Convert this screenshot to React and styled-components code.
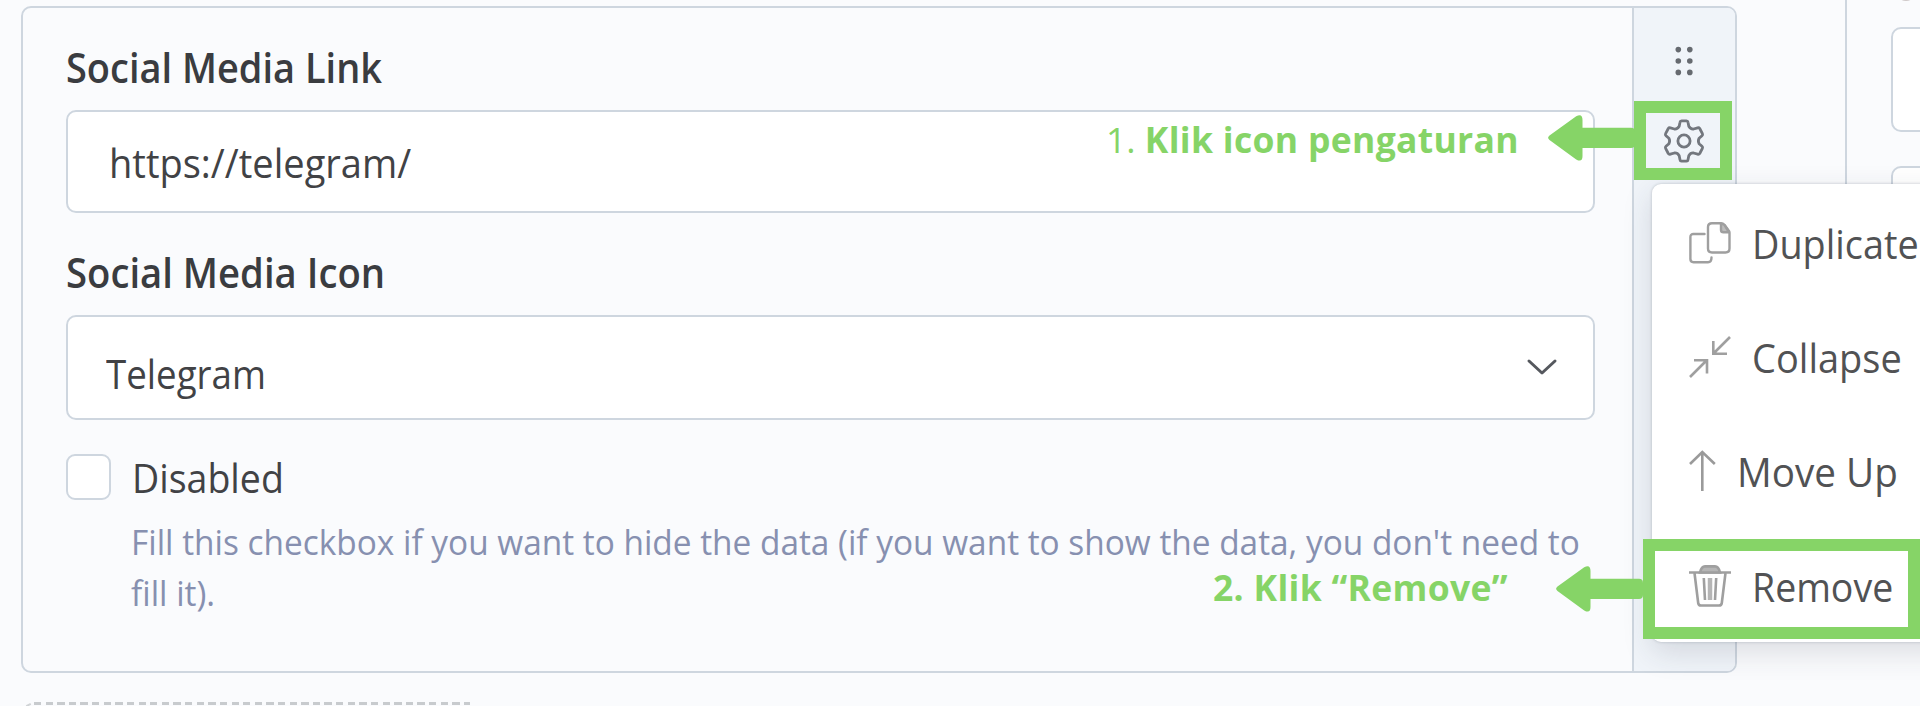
import React from "react";
import styled, { createGlobalStyle } from "styled-components";

const line = "#ced6df";
const green = "#86d467";

const GlobalStyle = createGlobalStyle`
  * { box-sizing: border-box; }
  html, body { margin: 0; padding: 0; }
  body { background: #fafbfd; overflow: hidden; font-family: "Open Sans", "Noto Sans", sans-serif; }
`;

const Page = styled.div`
  position: relative;
  width: 1920px;
  height: 706px;
  overflow: hidden;
  display: flex;
  background: #fafbfd;
  color: #414245;
`;

const Main = styled.main`
  width: 1845px;
  flex: none;
  padding: 6.4px 0 0 20.6px;
`;

const Card = styled.section`
  display: flex;
  width: 1716.4px;
  height: 667px;
  border: 2px solid ${line};
  border-radius: 10px;
  overflow: hidden;
`;

const Fields = styled.div`
  flex: 1;
  min-width: 0;
  padding: 0 37px 0 43.6px;
`;

const Rail = styled.aside`
  width: 103px;
  flex: none;
  border-left: 2px solid ${line};
  background: #f0f4f9;
  display: flex;
  flex-direction: column;
  align-items: center;
  padding-top: 38px;
  gap: 43px;
`;

/* $fit condenses the letter forms horizontally without changing their height */
const Text = styled.span`
  display: inline-block;
  white-space: nowrap;
  font-size: ${(p) => p.$size || 41}px;
  font-weight: ${(p) => p.$weight || 400};
  letter-spacing: ${(p) => p.$track || 0}px;
  transform: scaleX(${(p) => p.$fit || 1});
  transform-origin: left center;
`;

const SelectValue = styled(Text)`
  padding-top: 10px;
`;

const Label = styled.label`
  display: block;
  height: 102px;
  padding-top: 29px;
  line-height: 60px;
  color: #3a3c40;
`;

const Control = styled.div`
  display: flex;
  align-items: center;
  justify-content: space-between;
  height: ${(p) => p.$height}px;
  padding: ${(p) => p.$pad};
  border: 2px solid ${line};
  border-radius: 10px;
  background: #fff;
  line-height: 60px;
`;

const CheckRow = styled.div`
  display: flex;
  align-items: center;
  gap: 20.5px;
  margin-top: 34px;
  height: 46px;
`;

const Checkbox = styled.span`
  width: 45px;
  height: 46px;
  flex: none;
  border: 2px solid ${line};
  border-radius: 9px;
  background: #fff;
`;

const Help = styled.p`
  margin: 17px 0 0 65px;
  line-height: 50.6px;
  color: #8790b0;
  ${Text} { display: block; }
`;

const AddButton = styled.div`
  position: relative;
  width: 436px;
  height: 3px;
  margin: 29px 0 0 13.7px;
  background: repeating-linear-gradient(90deg, #c8cbce 0 7.3px, transparent 7.3px 11.62px);
  &::before {
    content: "";
    position: absolute;
    left: -8px;
    top: 1.5px;
    width: 5px;
    height: 2px;
    background: #d0d3d6;
    transform: rotate(-25deg);
  }
`;

const SidePanel = styled.aside`
  position: relative;
  flex: 1;
  height: 400px;
  border-left: 2px solid ${line};
  padding: 27px 0 0 44px;
  display: flex;
  flex-direction: column;
  gap: 34px;
  &::before {
    content: "";
    position: absolute;
    left: 52px;
    top: -8px;
    width: 14px;
    height: 9px;
    border-radius: 50%;
    background: #cfc9c9;
  }
`;

const SideField = styled.div`
  width: 200px;
  height: 105px;
  flex: none;
  border: 2px solid ${line};
  border-radius: 10px;
  background: #fff;
`;

const Menu = styled.div`
  position: absolute;
  left: 1652px;
  top: 184px;
  width: 320px;
  height: 458px;
  border-radius: 9px;
  background: #fff;
  box-shadow: 0 10px 30px rgba(40, 50, 70, 0.15), 0 0 3px rgba(40, 50, 70, 0.25);
  color: #515254;
  padding-top: 1.5px;
`;

const MenuItem = styled.div`
  display: flex;
  align-items: center;
  gap: ${(p) => p.$gap}px;
  height: 114.3px;
  padding-left: 37px;
  line-height: 60px;
  svg { flex: none; }
`;

const Highlight = styled.div`
  position: absolute;
  left: ${(p) => p.$x}px;
  top: ${(p) => p.$y}px;
  width: ${(p) => p.$w}px;
  height: ${(p) => p.$h}px;
  border: 12px solid ${green};
`;

const Callout = styled.div`
  position: absolute;
  left: ${(p) => p.$x}px;
  top: ${(p) => p.$y}px;
  display: flex;
  line-height: 48px;
  color: ${green};
`;

const ArrowBox = styled.svg`
  position: absolute;
  left: ${(p) => p.$x}px;
  top: ${(p) => p.$y}px;
`;

const Arrow = ({ x, y }) => (
  <ArrowBox $x={x} $y={y} width="88" height="46" viewBox="0 0 88 46" fill={green}>
    <path d="M1.5 20.5 28.2 1.2Q34.5-2 34.5 5V12.8H83Q87 12.8 87 17V29Q87 33 83 33H34.5V41Q34.5 48 28.2 44.4L1.5 25Q-1.3 22.8 1.5 20.5Z" />
  </ArrowBox>
);

const Dots = () => (
  <svg width="18" height="30" viewBox="0 0 18 30" fill="#666a70">
    {[3.3, 14.8].flatMap((x) => [3.6, 15, 26.4].map((y) => <circle key={x + "-" + y} cx={x} cy={y} r="2.8" />))}
  </svg>
);

const Gear = () => (
  <svg width="42" height="44" viewBox="0 0 42 44" fill="none" stroke="#73777e" strokeWidth="2.8" strokeLinejoin="round">
    <path d="M17 3.2Q17.2 1.8 18.5 1.8H23.5Q24.8 1.8 25 3.2L25.8 7.3Q27.5 10.3 30.6 10L34.6 8.8Q36 8.4 36.7 9.5L39.4 14.7Q40 15.8 39 16.7L36.1 19.3Q34.6 22 36.1 24.7L39 27.3Q40 28.2 39.4 29.3L36.7 34.5Q36 35.6 34.6 35.2L30.6 34Q27.5 33.7 25.8 36.7L25 40.8Q24.8 42.2 23.5 42.2H18.5Q17.2 42.2 17 40.8L16.2 36.7Q14.5 33.7 11.4 34L7.4 35.2Q6 35.6 5.3 34.5L2.6 29.3Q2 28.2 3 27.3L5.9 24.7Q7.4 22 5.9 19.3L3 16.7Q2 15.8 2.6 14.7L5.3 9.5Q6 8.4 7.4 8.8L11.4 10Q14.5 10.3 16.2 7.3Z" />
    <circle cx="21" cy="22" r="6.1" />
  </svg>
);

const Chevron = () => (
  <svg width="32" height="20" viewBox="0 0 32 20" fill="none" stroke="#55585e" strokeWidth="3" strokeLinecap="round" strokeLinejoin="round">
    <path d="M3 3 16 15 29 3" />
  </svg>
);

const CopyIcon = () => (
  <svg width="42" height="42" viewBox="0 0 42 42" fill="none" stroke="#9f9f9f" strokeWidth="2.4" strokeLinejoin="round" strokeLinecap="round">
    <path d="M15.5 12H4.5Q1.4 12 1.4 15V37Q1.4 40.2 4.5 40.2H19Q22.5 40.2 22.5 35.5" />
    <path d="M32 1.2H23Q19 1.2 19 5V26.5Q19 30.5 23 30.5H36.5Q40.5 30.5 40.5 26.5V11Q40.5 9 39 7.5L35.5 3Q34 1.2 32 1.2Z" />
    <path d="M32 1.5V8Q32 10.3 34.5 10.3H40L35.5 3Z" fill="#bdbdbd" />
  </svg>
);

const CollapseIcon = () => (
  <svg width="42" height="42" viewBox="0 0 42 42" fill="none" stroke="#9f9f9f" strokeWidth="2.6">
    <path d="M41 1 24.5 17.5M24.3 5V17.8H38M1 41 17.5 24.5M5 24.2H18V37.5" />
  </svg>
);

const UpIcon = () => (
  <svg width="27" height="42" viewBox="0 0 27 42" fill="none" stroke="#9a9a9a" strokeWidth="2.6">
    <path d="M13.3 41V2M1 14 13.3 2 25.8 14" />
  </svg>
);

const TrashIcon = () => (
  <svg width="42" height="42" viewBox="0 0 42 42" fill="none" stroke="#9f9f9f" strokeWidth="2.6">
    <path d="M0 7.5H42" />
    <path d="M11 7.5Q12.5 1.4 16 1.4H26Q29.5 1.4 31 7.5Z" fill="#b5b5b5" />
    <path d="M5.5 8 9.2 38Q9.5 40.5 12 40.5H30Q32.5 40.5 32.8 38L36.5 8" />
    <path d="M14.8 13 16 35M27.2 13 26 35" />
    <path d="M21 13V35" stroke="#b5b5b5" strokeWidth="4.5" />
  </svg>
);

const menuItems = [
  { label: "Duplicate", Icon: CopyIcon, gap: 20.5, fit: 0.922 },
  { label: "Collapse", Icon: CollapseIcon, gap: 20.5, fit: 0.927 },
  { label: "Move Up", Icon: UpIcon, gap: 21, fit: 0.942 },
  { label: "Remove", Icon: TrashIcon, gap: 20.5, fit: 0.914 },
];

export default function App() {
  return (
    <>
      <GlobalStyle />
      <Page>
        <Main>
          <Card>
            <Fields>
              <Label><Text $weight={600} $fit={0.926}>Social Media Link</Text></Label>
              <Control $height={103} $pad="0 36px 0 40.5px">
                <Text $fit={0.928}>https://telegram/</Text>
              </Control>
              <Label><Text $weight={600} $fit={0.933}>Social Media Icon</Text></Label>
              <Control $height={105} $pad="0 35px 0 38px">
                <SelectValue $fit={0.895}>Telegram</SelectValue>
                <Chevron />
              </Control>
              <CheckRow>
                <Checkbox />
                <Text $fit={0.915}>Disabled</Text>
              </CheckRow>
              <Help>
                <Text $size={34} $fit={0.982}>Fill this checkbox if you want to hide the data (if you want to show the data, you don't need to</Text>
                <Text $size={34} $fit={0.982}>fill it).</Text>
              </Help>
            </Fields>
            <Rail>
              <Dots />
              <Gear />
            </Rail>
          </Card>
          <AddButton />
        </Main>
        <SidePanel>
          <SideField />
          <SideField />
        </SidePanel>
        <Menu>
          {menuItems.map(({ label, Icon, gap, fit }) => (
            <MenuItem key={label} $gap={gap}>
              <Icon />
              <Text $fit={fit}>{label}</Text>
            </MenuItem>
          ))}
        </Menu>
        <Highlight $x={1634} $y={101} $w={98} $h={79} />
        <Highlight $x={1643} $y={538.5} $w={277} $h={100} />
        <Arrow x={1547.6} y={115.4} />
        <Arrow x={1555.6} y={565.7} />
        <Callout $x={1106} $y={115}>
          <Text $size={35.5}>1.&nbsp;</Text>
          <Text $size={35.5} $weight={700} $track={0.3}>Klik icon pengaturan</Text>
        </Callout>
        <Callout $x={1213} $y={563}>
          <Text $size={35.5} $weight={700} $track={0.3}>2. Klik “Remove”</Text>
        </Callout>
      </Page>
    </>
  );
}
